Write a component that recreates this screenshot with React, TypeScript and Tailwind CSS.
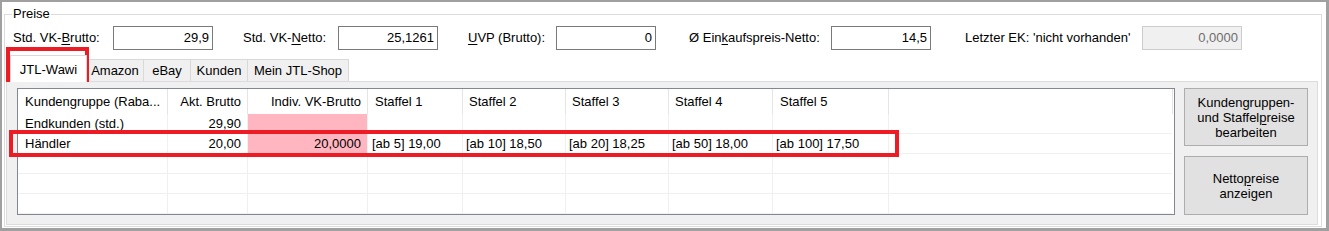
import React from 'react'

// Preise-Box mit Feldern, Reitern und Kundengruppen-Tabelle
function Mn({ children }: { children: React.ReactNode }) {
  return <span className="underline decoration-1 underline-offset-[2px]">{children}</span>
}

const tabs = [
  { label: 'Amazon', w: 'w-[58px]' },
  { label: 'eBay', w: 'w-[48px]' },
  { label: 'Kunden', w: 'w-[58px]' },
  { label: 'Mein JTL-Shop', w: 'w-[102px]' },
]

const cols = [
  { label: 'Kundengruppe (Raba...', w: 'w-[150px]', head: 'pl-[7px] text-left', cell: 'pl-[7px] text-left' },
  { label: 'Akt. Brutto', w: 'w-[80px]', head: 'pr-[6px] text-right', cell: 'pr-[6px] text-right' },
  { label: 'Indiv. VK-Brutto', w: 'w-[120px]', head: 'pr-[6px] text-right', cell: 'pr-[6px] text-right' },
  { label: 'Staffel 1', w: 'w-[95px]', head: 'pl-[7px] text-left', cell: 'pl-[4px] text-left' },
  { label: 'Staffel 2', w: 'w-[103px]', head: 'pl-[6px] text-left', cell: 'pl-[3px] text-left' },
  { label: 'Staffel 3', w: 'w-[103px]', head: 'pl-[6px] text-left', cell: 'pl-[3px] text-left' },
  { label: 'Staffel 4', w: 'w-[104px]', head: 'pl-[6px] text-left', cell: 'pl-[3px] text-left' },
  { label: 'Staffel 5', w: 'w-[116px]', head: 'pl-[7px] text-left', cell: 'pl-[3px] text-left' },
]

const rows = [
  ['Endkunden (std.)', '29,90', '', '', '', '', '', ''],
  ['Händler', '20,00', '20,0000', '[ab 5] 19,00', '[ab 10] 18,50', '[ab 20] 18,25', '[ab 50] 18,00', '[ab 100] 17,50'],
  ['', '', '', '', '', '', '', ''],
  ['', '', '', '', '', '', '', ''],
  ['', '', '', '', '', '', '', ''],
]

export default function App() {
  return (
    <div className="relative w-[1329px] h-[231px] bg-white border-t-2 border-l-2 border-r-[3px] border-b-[3px] border-[#a0a0a0] font-['Liberation_Sans',Arial,sans-serif] text-[13px] leading-[16px] text-black">
      <fieldset className="mt-[4px] ml-[2px] w-[1318px] h-[221px] border border-[#dcdcdc]">
        <legend className="ml-[7px] px-[1px] text-[13px] leading-[16px]">Preise</legend>

        {/* Felder */}
        <div className="flex items-center pl-[8px] mt-[4px] h-[24px]">
          <div className="flex items-center">
            <span className="w-[100px]">Std. VK-<Mn>B</Mn>rutto:</span>
            <div className="w-[100px] h-[24px] border border-[#7a7a7a] pr-[3px] text-right leading-[22px]">29,9</div>
          </div>
          <div className="flex items-center ml-[30px]">
            <span className="w-[95px]">Std. VK-<Mn>N</Mn>etto:</span>
            <div className="w-[100px] h-[24px] border border-[#7a7a7a] pr-[3px] text-right leading-[22px]">25,1261</div>
          </div>
          <div className="flex items-center ml-[30px]">
            <span className="w-[88px]"><Mn>U</Mn>VP (Brutto):</span>
            <div className="w-[100px] h-[24px] border border-[#7a7a7a] pr-[3px] text-right leading-[22px]">0</div>
          </div>
          <div className="flex items-center ml-[33px]">
            <span className="w-[142px]">Ø Ein<Mn>k</Mn>aufspreis-Netto:</span>
            <div className="w-[100px] h-[24px] border border-[#7a7a7a] pr-[3px] text-right leading-[22px]">14,5</div>
          </div>
          <div className="flex items-center ml-[34px]">
            <span className="w-[177px]">Letzter EK: 'nicht vorhanden'</span>
            <div className="w-[100px] h-[24px] border border-[#cccccc] bg-[#f0f0f0] pr-[3px] text-right leading-[22px] text-[#6d6d6d]">0,0000</div>
          </div>
        </div>

        {/* Reiter */}
        <div className="ml-[1px] mt-[5px] w-[1312px]">
          <div className="flex items-end h-[26px] pl-[4px]">
            <div className="relative z-10 -mb-px w-[77px] h-[27px] bg-white border border-b-0 border-[#d9d9d9] flex items-center justify-center pt-[1px]">
              JTL-Wawi
            </div>
            {tabs.map((t) => (
              <div
                key={t.label}
                className={`${t.w} h-[22px] -ml-px bg-[#f0f0f0] border border-b-0 border-[#d9d9d9] flex items-center justify-center`}
              >
                {t.label}
              </div>
            ))}
          </div>

          <div className="h-[144px] border border-[#dcdcdc] bg-[#f0f0f0] pl-[10px] pr-[8px] pt-[6px] flex">
            {/* Tabelle */}
            <div className="w-[1158px] h-[127px] border border-[#828790] bg-white flex flex-col">
              <div className="flex h-[25px]">
                {cols.map((c) => (
                  <div key={c.label} className={`${c.w} ${c.head} shrink-0 h-full border-r border-[#e5e5e5] leading-[25px] whitespace-nowrap`}>
                    {c.label}
                  </div>
                ))}
                <div className="flex-1 border-r border-[#e5e5e5] mr-[1px]" />
              </div>
              {rows.map((r, i) => (
                <div key={i} className="flex h-[20px] border-b border-[#f0f0f0] mr-[2px]">
                  {r.map((v, j) => (
                    <div
                      key={j}
                      className={`${cols[j].w} ${cols[j].cell} shrink-0 h-full border-r border-[#f0f0f0] leading-[19px] whitespace-nowrap ${j === 2 && i < 2 ? 'bg-[#ffb6c1]' : ''}`}
                    >
                      {v}
                    </div>
                  ))}
                  <div className="flex-1" />
                </div>
              ))}
            </div>

            {/* Knöpfe */}
            <div className="ml-[9px] flex flex-col gap-[10px]">
              <button className="w-[124px] h-[58px] bg-[#e1e1e1] border border-[#adadad] flex flex-col items-center justify-center leading-[15px]">
                <span>Kundengruppen-</span>
                <span>und Staffel<Mn>p</Mn>reise</span>
                <span>bearbeiten</span>
              </button>
              <button className="w-[124px] h-[59px] bg-[#e1e1e1] border border-[#adadad] flex flex-col items-center justify-center leading-[15px]">
                <span>Netto<Mn>p</Mn>reise</span>
                <span>anzeigen</span>
              </button>
            </div>
          </div>
        </div>
      </fieldset>

      {/* rote Markierungen */}
      <div className="absolute left-[4px] top-[45px] w-[83px] h-[35px] border-4 border-[#ed1c24]" />
      <div className="absolute left-[7px] top-[128px] w-[890px] h-[27px] border-4 border-[#ed1c24]" />
    </div>
  )
}
